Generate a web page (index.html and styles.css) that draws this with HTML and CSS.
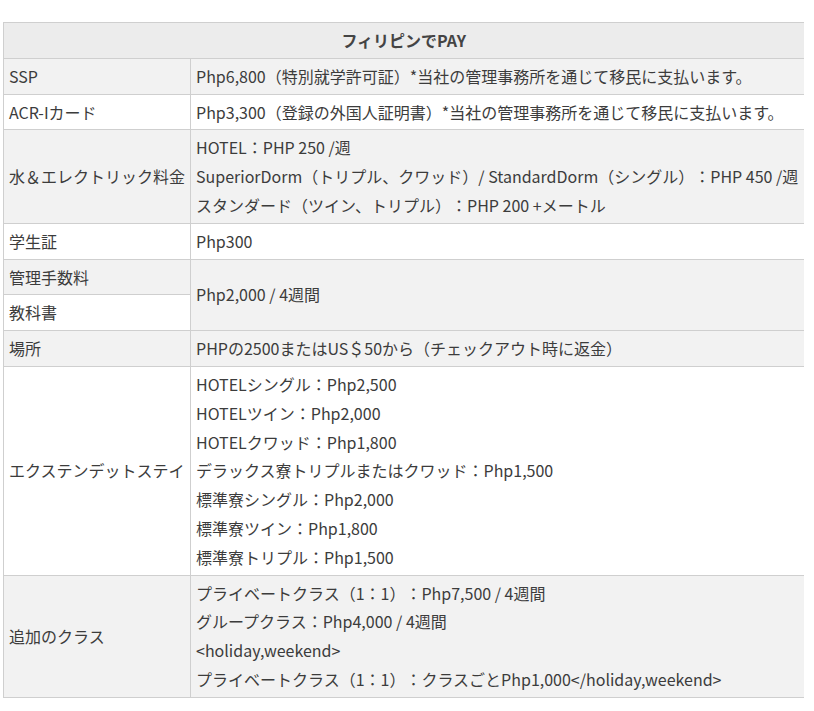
FILE: index.html
```html
<!DOCTYPE html>
<html lang="ja">
<head>
<meta charset="utf-8">
<link rel="stylesheet" href="styles.css">
</head>
<body>
<div class="wrap">
<table class="fees">
  <colgroup><col class="c1"><col class="c2"></colgroup>
  <thead>
    <tr><th colspan="2">フィリピンでPAY</th></tr>
  </thead>
  <tbody>
    <tr><td class="k">SSP</td><td class="v">Php6,800（特別就学許可証）*当社の管理事務所を通じて移民に支払います。</td></tr>
    <tr><td class="k">ACR-Iカード</td><td class="v">Php3,300（登録の外国人証明書）*当社の管理事務所を通じて移民に支払います。</td></tr>
    <tr><td class="k">水＆エレクトリック料金</td><td class="v">HOTEL：PHP 250 /週<br>SuperiorDorm（トリプル、クワッド）/ StandardDorm（シングル）：PHP 450 /週<br>スタンダード（ツイン、トリプル）：PHP 200 +メートル</td></tr>
    <tr><td class="k">学生証</td><td class="v">Php300</td></tr>
    <tr><td class="k">管理手数料</td><td class="v span" rowspan="2">Php2,000 / 4週間</td></tr>
    <tr><td class="k">教科書</td></tr>
    <tr><td class="k">場所</td><td class="v">PHPの2500またはUS＄50から（チェックアウト時に返金）</td></tr>
    <tr><td class="k">エクステンデットステイ</td><td class="v">HOTELシングル：Php2,500<br>HOTELツイン：Php2,000<br>HOTELクワッド：Php1,800<br>デラックス寮トリプルまたはクワッド：Php1,500<br>標準寮シングル：Php2,000<br>標準寮ツイン：Php1,800<br>標準寮トリプル：Php1,500</td></tr>
    <tr><td class="k">追加のクラス</td><td class="v">プライベートクラス（1：1）：Php7,500 / 4週間<br>グループクラス：Php4,000 / 4週間<br>&lt;holiday,weekend&gt;<br>プライベートクラス（1：1）：クラスごとPhp1,000&lt;/holiday,weekend&gt;</td></tr>
  </tbody>
</table>
</div>
</body>
</html>
```
FILE: styles.css
```css
html, body {
  margin: 0;
  padding: 0;
  background: #fff;
}
.wrap {
  padding: 22px 11px 0 3px;
  overflow: hidden;
}
.fees {
  width: 800px;
  table-layout: fixed;
  border-collapse: collapse;
  font-family: "Noto Sans CJK JP", "Noto Sans", sans-serif;
  font-size: 16px;
  line-height: 28.8px;
  color: #3c3c3c;
  border-left: 1px solid #cfcfcf;
  text-spacing-trim: space-all;
}
.c1 { width: 187px; }
.c2 { width: 613px; }
.fees th {
  background: #ececec;
  font-weight: bold;
  text-align: center;
  padding: 3px 5px;
  border-top: 1px solid #cfcfcf;
  border-bottom: 1px solid #cfcfcf;
  color: #444;
}
.fees td {
  padding: 3px 5px;
  border-bottom: 1px solid #cfcfcf;
  vertical-align: middle;
  text-align: left;
  white-space: nowrap;
}
.fees td.k {
  border-right: 1px solid #cfcfcf;
}
.fees tbody tr:nth-child(odd) td {
  background: #f2f2f2;
}
.fees tbody tr:nth-child(even) td {
  background: #fff;
}
.fees tbody tr:nth-child(even) td.span {
  background: #f2f2f2;
}
```
